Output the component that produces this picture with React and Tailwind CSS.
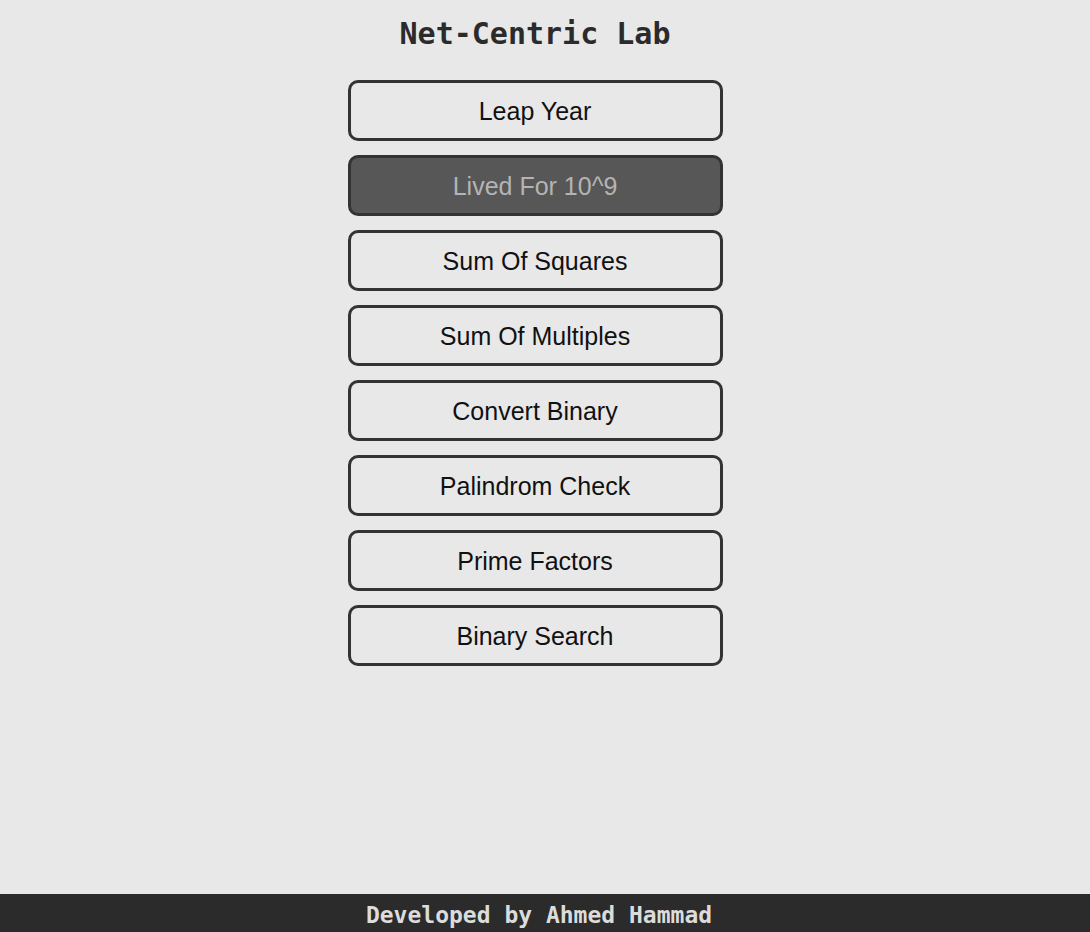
const items = [
  'Leap Year',
  'Lived For 10^9',
  'Sum Of Squares',
  'Sum Of Multiples',
  'Convert Binary',
  'Palindrom Check',
  'Prime Factors',
  'Binary Search',
]

export default function App() {
  const active = 'Lived For 10^9'

  return (
    <div className="min-h-screen flex flex-col bg-[#e8e8e8]">
      <main className="flex-1 flex flex-col items-center pr-[20px]">
        <h1 className="mt-[15px] text-[30px] leading-[38px] font-bold text-[#2b2b2b] font-['DejaVu_Sans_Mono',monospace]">
          Net-Centric Lab
        </h1>
        <div className="mt-[27px] flex flex-col gap-[14px]">
          {items.map((item) => (
            <button
              key={item}
              className={
                item === active
                  ? "w-[375px] h-[61px] pt-[2px] rounded-[10px] border-[3px] border-[#333] bg-[#575757] text-[#b4b4b4] text-[25px] font-['Liberation_Sans',Arial,sans-serif]"
                  : "w-[375px] h-[61px] pt-[2px] rounded-[10px] border-[3px] border-[#333] bg-[#e8e8e8] text-[#111] text-[25px] font-['Liberation_Sans',Arial,sans-serif]"
              }
            >
              {item}
            </button>
          ))}
        </div>
      </main>
      <footer className="h-[38px] pt-[4px] pr-[12px] bg-[#2b2b2b] flex items-center justify-center text-[#dcdcdc] text-[23px] font-bold font-['DejaVu_Sans_Mono',monospace]">
        Developed by Ahmed Hammad
      </footer>
    </div>
  )
}
